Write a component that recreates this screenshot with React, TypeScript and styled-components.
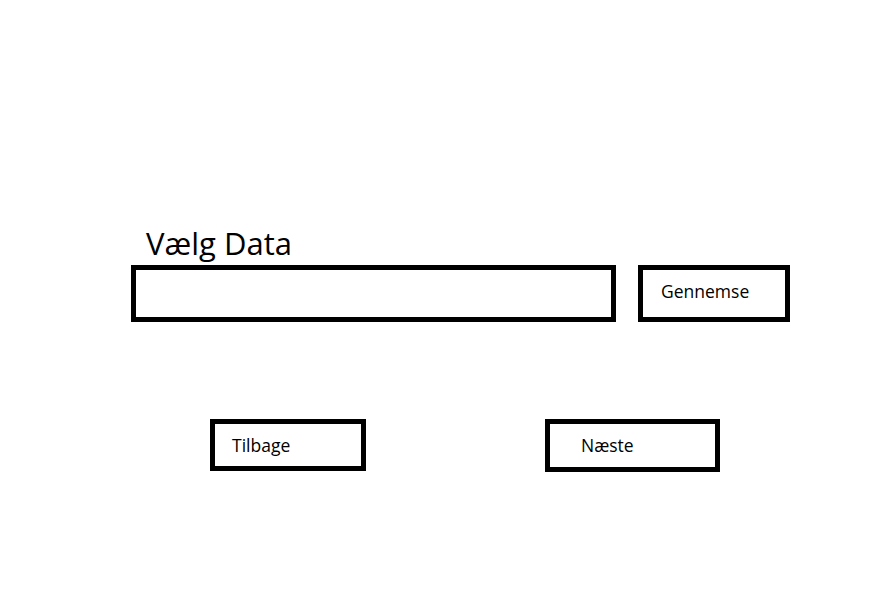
import React from "react";
import styled, { createGlobalStyle } from "styled-components";

const GlobalStyle = createGlobalStyle`
  html, body {
    margin: 0;
    padding: 0;
    background: #ffffff;
  }
  body {
    font-family: "Open Sans", "Liberation Sans", sans-serif;
    color: #000000;
  }
`;

const Page = styled.div`
  width: 875px;
  height: 613px;
  padding-top: 226px;
  box-sizing: border-box;
`;

const Title = styled.h1`
  margin: 0 0 0 146px;
  font-size: 31px;
  font-weight: 400;
  line-height: 34px;
  height: 39px;
`;

const PathRow = styled.div`
  display: flex;
  gap: 22px;
  margin-left: 131px;
`;

const PathField = styled.div`
  width: 485px;
  height: 57px;
  border: 5px solid #000;
  box-sizing: border-box;
`;

const NavRow = styled.div`
  display: flex;
  align-items: flex-start;
  margin-top: 97px;
`;

const BoxButton = styled.div<{ $left: number; $width: number; $height: number; $padLeft: number }>`
  margin-left: ${(p) => p.$left}px;
  width: ${(p) => p.$width}px;
  height: ${(p) => p.$height}px;
  padding-left: ${(p) => p.$padLeft}px;
  padding-top: 9px;
  border: 5px solid #000;
  box-sizing: border-box;
  font-size: 17.5px;
  line-height: 24px;
`;

export default function App() {
  return (
    <>
      <GlobalStyle />
      <Page>
        <Title>Vælg Data</Title>
        <PathRow>
          <PathField />
          <BoxButton $left={0} $width={152} $height={57} $padLeft={18}>
            Gennemse
          </BoxButton>
        </PathRow>
        <NavRow>
          <BoxButton $left={210} $width={156} $height={52} $padLeft={17}>
            Tilbage
          </BoxButton>
          <BoxButton $left={179} $width={175} $height={53} $padLeft={31}>
            Næste
          </BoxButton>
        </NavRow>
      </Page>
    </>
  );
}
